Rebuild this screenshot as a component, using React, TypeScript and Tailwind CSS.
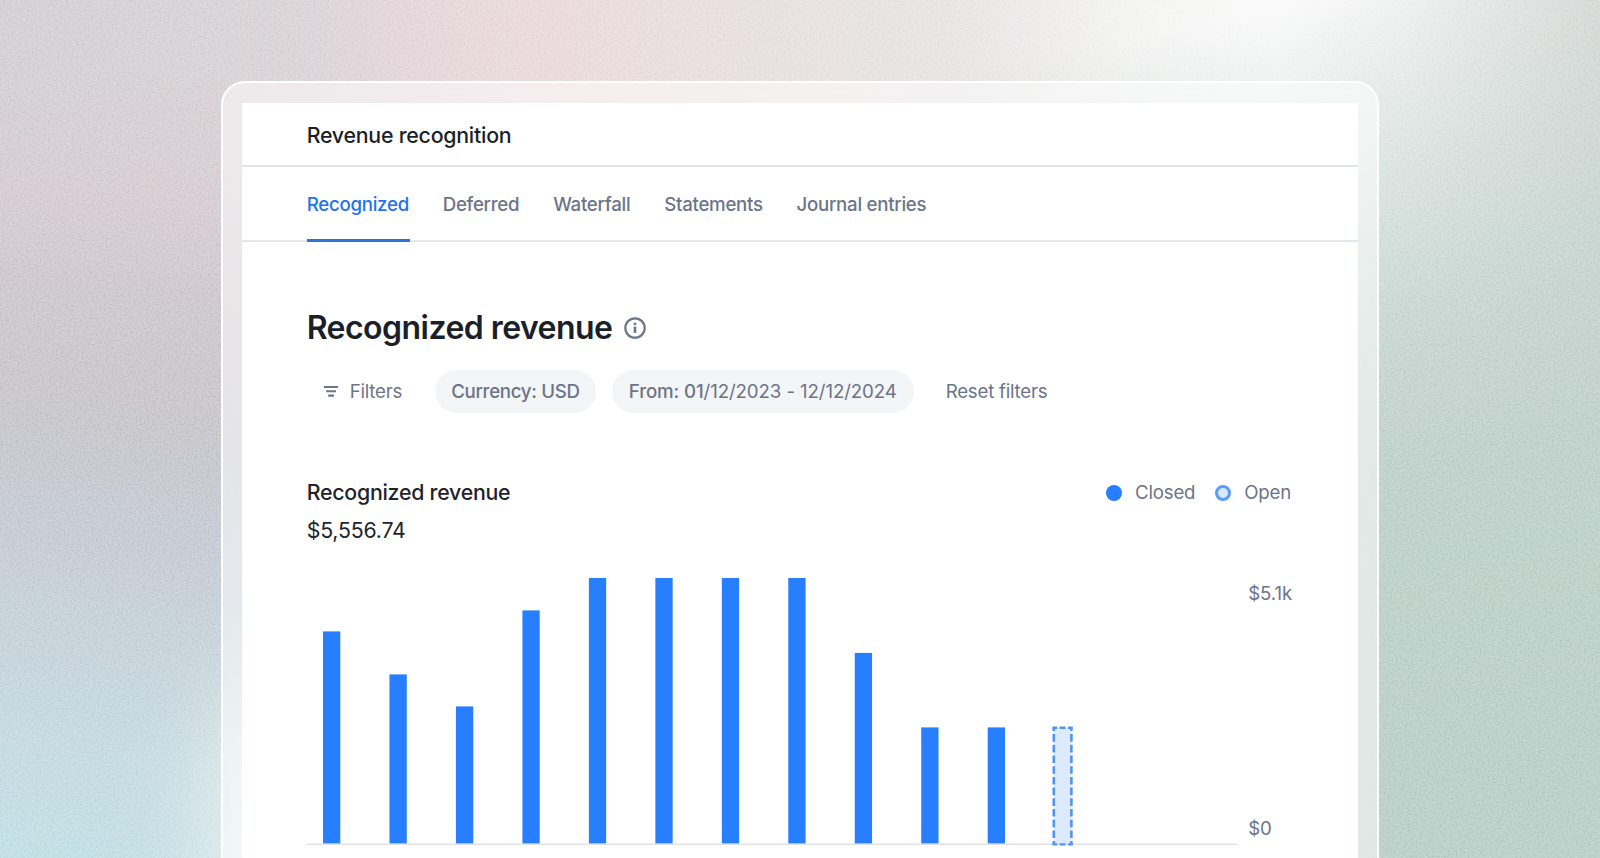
import clsx from 'clsx'

const tabs = ['Recognized', 'Deferred', 'Waterfall', 'Statements', 'Journal entries']

const closedBars = [212, 169, 137, 233, 265.4, 265.4, 265.4, 265.4, 190.5, 116, 116]

const BAR_STEP = 66.47
const BASELINE = 265.4

const Backdrop: React.FC = () => (
  <svg className="absolute inset-0 h-full w-full" viewBox="0 0 1600 858" preserveAspectRatio="none">
    <defs>
      <filter id="soft" x="-100%" y="-100%" width="300%" height="300%">
        <feGaussianBlur stdDeviation="50" />
      </filter>
      <filter id="grain" x="0" y="0" width="100%" height="100%" colorInterpolationFilters="sRGB">
        <feTurbulence type="fractalNoise" baseFrequency="0.5" numOctaves="2" seed="4" />
        <feColorMatrix values="2 0 0 0 -0.5  2 0 0 0 -0.5  2 0 0 0 -0.5  0 0 0 0 1" />
      </filter>
      <linearGradient id="top" gradientUnits="userSpaceOnUse" x1="0" y1="0" x2="1600" y2="-120">
        <stop offset="0" stopColor="#d5d3d6" />
        <stop offset="0.17" stopColor="#dcd6d9" />
        <stop offset="0.25" stopColor="#e5d9dd" />
        <stop offset="0.34" stopColor="#ecdcdf" />
        <stop offset="0.44" stopColor="#eae1e1" />
        <stop offset="0.59" stopColor="#e9e6e6" />
        <stop offset="0.7" stopColor="#f4f4f3" />
        <stop offset="0.79" stopColor="#fafafa" />
        <stop offset="0.87" stopColor="#f2f3f2" />
        <stop offset="1" stopColor="#dadcda" />
      </linearGradient>
      <linearGradient id="left" gradientUnits="userSpaceOnUse" x1="0" y1="0" x2="-80" y2="858">
        <stop offset="0.06" stopColor="#dccfd4" stopOpacity="0" />
        <stop offset="0.22" stopColor="#d9cfd4" stopOpacity="0.9" />
        <stop offset="0.34" stopColor="#d0cbcf" />
        <stop offset="0.48" stopColor="#cbcacf" />
        <stop offset="0.6" stopColor="#c9ced7" />
        <stop offset="0.72" stopColor="#c9d5db" />
        <stop offset="0.86" stopColor="#c8dde3" />
        <stop offset="1" stopColor="#c5e1e6" />
      </linearGradient>
      <linearGradient id="right" gradientUnits="userSpaceOnUse" x1="1340" y1="0" x2="1480" y2="760">
        <stop offset="0" stopColor="#c6d6d1" stopOpacity="0" />
        <stop offset="0.25" stopColor="#c6d6d1" stopOpacity="0.55" />
        <stop offset="0.42" stopColor="#c5d5d0" stopOpacity="0.85" />
        <stop offset="0.6" stopColor="#c3d4ce" />
        <stop offset="1" stopColor="#bfd2cb" />
      </linearGradient>
    </defs>
    <rect width="1600" height="858" fill="url(#top)" />
    <rect width="800" height="858" fill="url(#left)" />
    <rect x="800" width="800" height="858" fill="url(#right)" />
    <ellipse cx="300" cy="850" rx="90" ry="180" fill="#eff2f1" filter="url(#soft)" />
    <rect width="1600" height="858" filter="url(#grain)" opacity="0.28" className="mix-blend-soft-light" />
  </svg>
)

const FilterIcon: React.FC = () => (
  <svg className="h-[13px] w-4 shrink-0" viewBox="0 0 16 13" fill="none" stroke="currentColor" strokeWidth="2.1">
    <path d="M1 2h14M3.2 6.3h9.8M5.2 10.6h5.8" />
  </svg>
)

const InfoIcon: React.FC = () => (
  <svg className="size-[22px] shrink-0 text-[#6c7688]" viewBox="0 0 22 22" fill="none" stroke="currentColor">
    <circle cx="11" cy="11" r="9.7" strokeWidth="2.2" />
    <path d="M11 9.6v6.4" strokeWidth="2.6" />
    <path d="M11 5.7v2.4" strokeWidth="2.6" />
  </svg>
)

const Legend: React.FC = () => (
  <div className="flex items-center text-[18.67px] leading-7 tracking-[-0.22px] text-[#6c7489]">
    <span className="mr-[13px] size-4 rounded-full bg-[#277eff]" />
    Closed
    <span className="mr-[13px] ml-5 size-4 rounded-full border-[3px] border-[#5a9cf8] bg-[#d8e9fc]" />
    Open
  </div>
)

const Chart: React.FC = () => (
  <svg className="block h-[270px] w-[930px] shrink-0" viewBox="0 0 930 270">
    <path d="M0 266.2h930" stroke="#e0e2e5" strokeWidth="1.6" />
    {closedBars.map((height, i) => (
      <rect key={i} x={16 + i * BAR_STEP} y={BASELINE - height} width="17.3" height={height} fill="#277eff" />
    ))}
    <rect x="746.8" y="149.7" width="17.6" height="116.6" fill="#dceafb" />
    <path d="M746.8 149v118M764.4 149v118" stroke="#5394f0" strokeWidth="2.6" strokeDasharray="7.6 3.1" strokeDashoffset="3.6" />
    <path d="M745.6 149.7h20M745.6 266.4h20" stroke="#5394f0" strokeWidth="2.4" strokeDasharray="4.6 2.4 6 2.4" />
  </svg>
)

const App: React.FC = () => {
  return (
    <div className="relative h-[858px] w-full overflow-hidden bg-[#d6d4d6] font-['Inter',sans-serif]">
      <Backdrop />
      <div className="relative mx-auto mt-[81px] h-[900px] w-[1158px] rounded-t-[24px] border-2 border-white bg-white/50 px-[19px] pt-[19.5px] backdrop-blur-sm">
        <main className="h-full bg-white">
          <header className="flex h-[64.5px] items-center border-b-2 border-[#e1e4e7] px-[64.7px] pt-[4px] text-[21.33px] font-medium tracking-[-0.24px] text-[#1b1f27]">
            Revenue recognition
          </header>
          <nav className="flex h-[75px] gap-[32.3px] border-b-2 border-[#e5e7ec] px-[64.7px] text-[18.67px] font-medium tracking-[-0.27px] text-[#6b7488]">
            {tabs.map((tab, i) => (
              <a
                key={tab}
                className={clsx(
                  '-mb-[2px] flex items-center pr-[1.5px]',
                  i === 0 && 'border-b-[3px] border-[#2f74dd] pt-[3px] text-[#2272ee]'
                )}
              >
                {tab}
              </a>
            ))}
          </nav>

          <section className="px-[64.7px] pt-16">
            <div className="flex h-11 items-center gap-3">
              <h1 className="text-[32px] font-semibold tracking-[-0.54px] text-[#1b1f29]">Recognized revenue</h1>
              <InfoIcon />
            </div>
            <div className="mt-5 flex h-[43px] items-center text-[18.67px] tracking-[-0.22px] text-[#6c7489]">
              <div className="flex items-center gap-[11px] px-4">
                <FilterIcon />
                Filters
              </div>
              <div className="ml-[17px] flex h-full items-center rounded-full bg-[#f3f5f7] px-4 font-medium tracking-[-0.3px]">
                Currency: USD
              </div>
              <div className="ml-4 flex h-full items-center rounded-full bg-[#f3f5f7] px-[17px] tracking-[-0.1px]">
                <span className="font-medium">From: 01</span>/12/2023 - 12/12/2024
              </div>
              <div className="ml-8">Reset filters</div>
            </div>
          </section>

          <section className="mt-[62px] pr-[67px] pl-[64.7px]">
            <div className="flex h-9 items-center justify-between">
              <h2 className="text-[21.33px] font-medium tracking-[-0.25px] text-[#1f232b]">Recognized revenue</h2>
              <Legend />
            </div>
            <p className="mt-[3px] text-[21.33px] leading-8 tracking-[-0.2px] text-[#1f232b]">$5,556.74</p>
            <div className="mt-8 flex gap-[11.5px]">
              <Chart />
              <div className="flex h-[265px] flex-col justify-between pt-[2px] text-[18.67px] leading-7 tracking-[-0.1px] text-[#6c7489]">
                <span>$5.1k</span>
                <span>$0</span>
              </div>
            </div>
          </section>
        </main>
      </div>
    </div>
  )
}

export default App
